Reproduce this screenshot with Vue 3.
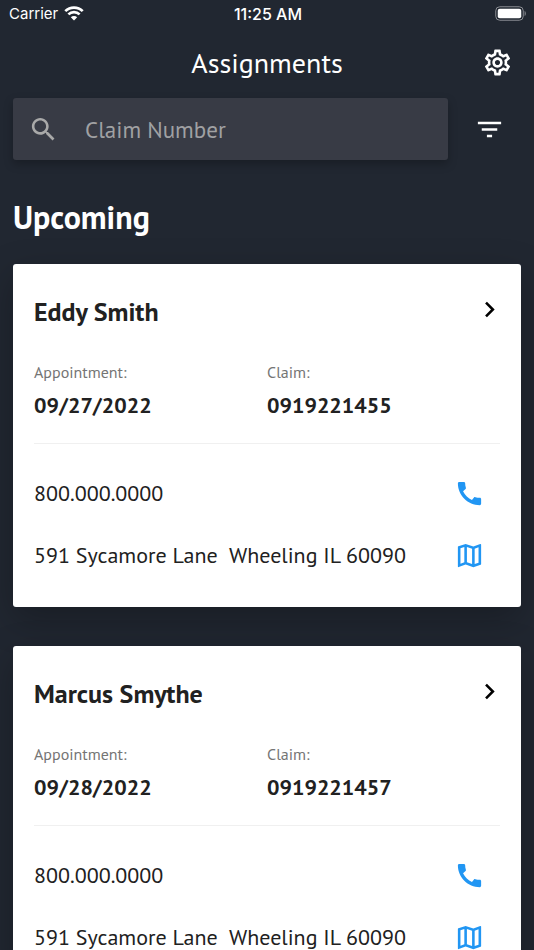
<template>
  <div class="app">
    <div class="status-bar">
      <div class="carrier">
        <span>Carrier</span>
        <svg class="wifi" viewBox="0 0 20 15" aria-hidden="true">
          <path d="M1.3 5.1a12.4 12.4 0 0 1 17.4 0" />
          <path d="M4.4 8.4a8 8 0 0 1 11.2 0" />
          <path class="dot" d="M10 14.5L6.8 11.3a4.6 4.6 0 0 1 6.4 0z" />
        </svg>
      </div>
      <span class="time">11:25 AM</span>
      <svg class="battery" viewBox="0 0 32 15" aria-hidden="true">
        <rect class="shell" x="0.75" y="0.75" width="27.5" height="13.5" rx="4" />
        <rect x="2.75" y="2.75" width="23.5" height="9.5" rx="2" />
        <path class="tip" d="M29.6 5c1.6.6 1.6 4.4 0 5z" />
      </svg>
    </div>

    <header class="header">
      <h1>Assignments</h1>
      <button class="icon-button settings" type="button" aria-label="Settings">
        <svg class="icon" viewBox="0 0 24 24"><path :d="icons.settings" /></svg>
      </button>
    </header>

    <form class="search-row" @submit.prevent>
      <label class="search">
        <svg class="icon" viewBox="0 0 24 24"><path :d="icons.search" /></svg>
        <input v-model="query" type="text" placeholder="Claim Number" aria-label="Claim Number">
      </label>
      <button class="icon-button filter" type="button" aria-label="Filter">
        <svg class="icon" viewBox="0 0 24 24"><path :d="icons.filter" /></svg>
      </button>
    </form>

    <main class="content">
      <h2>Upcoming</h2>
      <article v-for="item in filteredAssignments" :key="item.claim" class="card">
        <div class="card-header">
          <h3>{{ item.name }}</h3>
          <button class="icon-button" type="button" :aria-label="'Open ' + item.name">
            <svg class="icon" viewBox="0 0 24 24"><path :d="icons.chevron" /></svg>
          </button>
        </div>
        <dl class="details">
          <div>
            <dt>Appointment:</dt>
            <dd>{{ item.date }}</dd>
          </div>
          <div>
            <dt>Claim:</dt>
            <dd>{{ item.claim }}</dd>
          </div>
        </dl>
        <div class="contact">
          <div class="contact-row">
            <span>{{ item.phone }}</span>
            <a :href="'tel:' + item.phone" aria-label="Call">
              <svg class="icon" viewBox="0 0 24 24"><path :d="icons.phone" /></svg>
            </a>
          </div>
          <div class="contact-row">
            <span>{{ item.street }}&nbsp; {{ item.city }}</span>
            <a href="#map" aria-label="Map">
              <svg class="icon" viewBox="0 0 24 24"><path :d="icons.map" /></svg>
            </a>
          </div>
        </div>
      </article>
    </main>
  </div>
</template>

<script setup>
import { computed, ref } from 'vue';

const query = ref('');

const assignments = ref([
  {
    name: 'Eddy Smith',
    date: '09/27/2022',
    claim: '0919221455',
    phone: '800.000.0000',
    street: '591 Sycamore Lane',
    city: 'Wheeling IL 60090'
  },
  {
    name: 'Marcus Smythe',
    date: '09/28/2022',
    claim: '0919221457',
    phone: '800.000.0000',
    street: '591 Sycamore Lane',
    city: 'Wheeling IL 60090'
  }
]);

const filteredAssignments = computed(() =>
  assignments.value.filter(item => item.claim.includes(query.value.trim()))
);

const icons = {
  search: 'M15.5 14h-.79l-.28-.27C15.41 12.59 16 11.11 16 9.5 16 5.91 13.09 3 9.5 3S3 5.91 3 9.5 5.91 16 9.5 16c1.61 0 3.09-.59 4.23-1.57l.27.28v.79l5 4.99L20.49 19l-4.99-5zm-6 0C7.01 14 5 11.99 5 9.5S7.01 5 9.5 5 14 7.01 14 9.5 11.99 14 9.5 14z',
  filter: 'M10 18h4v-2h-4v2zM3 6v2h18V6H3zm3 7h12v-2H6v2z',
  chevron: 'M10 6L8.59 7.41 13.17 12l-4.58 4.59L10 18l6-6z',
  phone: 'M20.01 15.38c-1.23 0-2.42-.2-3.53-.56-.35-.12-.74-.03-1.01.24l-1.57 1.97c-2.83-1.35-5.48-3.9-6.89-6.83l1.95-1.66c.27-.28.35-.67.24-1.02-.37-1.11-.56-2.3-.56-3.53 0-.54-.45-.99-.99-.99H4.19C3.65 3 3 3.24 3 3.99 3 13.28 10.73 21 20.01 21c.71 0 .99-.63.99-1.18v-3.45c0-.54-.45-.99-.99-.99z',
  map: 'M20.5 3l-.16.03L15 5.1 9 3 3.36 4.9c-.21.07-.36.25-.36.48V20.5c0 .28.22.5.5.5l.16-.03L9 18.9l6 2.1 5.64-1.9c.21-.07.36-.25.36-.48V3.5c0-.28-.22-.5-.5-.5zM10 5.47l4 1.4v11.66l-4-1.4V5.47zm-5 .99l3-1.01v11.7l-3 1.16V6.46zm14 11.08l-3 1.01V6.86l3-1.16v11.84z',
  settings: 'M19.43 12.98c.04-.32.07-.64.07-.98 0-.34-.03-.66-.07-.98l2.11-1.65c.19-.15.24-.42.12-.64l-2-3.46c-.09-.16-.26-.25-.44-.25-.06 0-.12.01-.17.03l-2.49 1c-.52-.4-1.08-.73-1.69-.98l-.38-2.65C14.46 2.18 14.25 2 14 2h-4c-.25 0-.46.18-.49.42l-.38 2.65c-.61.25-1.17.59-1.69.98l-2.49-1c-.06-.02-.12-.03-.18-.03-.17 0-.34.09-.43.25l-2 3.46c-.13.22-.07.49.12.64l2.11 1.65c-.04.32-.07.65-.07.98 0 .33.03.66.07.98l-2.11 1.65c-.19.15-.24.42-.12.64l2 3.46c.09.16.26.25.44.25.06 0 .12-.01.17-.03l2.49-1c.52.4 1.08.73 1.69.98l.38 2.65c.03.24.24.42.49.42h4c.25 0 .46-.18.49-.42l.38-2.65c.61-.25 1.17-.59 1.69-.98l2.49 1c.06.02.12.03.18.03.17 0 .34-.09.43-.25l2-3.46c.12-.22.07-.49-.12-.64l-2.11-1.65zm-1.98-1.71c.04.31.05.52.05.73 0 .21-.02.43-.05.73l-.14 1.13.89.7 1.08.84-.7 1.21-1.27-.51-1.04-.42-.9.68c-.43.32-.84.56-1.25.73l-1.06.43-.16 1.13-.2 1.35h-1.4l-.19-1.35-.16-1.13-1.06-.43c-.43-.18-.83-.41-1.23-.71l-.91-.7-1.06.43-1.27.51-.7-1.21 1.08-.84.89-.7-.14-1.13c-.03-.31-.05-.54-.05-.74s.02-.43.05-.73l.14-1.13-.89-.7-1.08-.84.7-1.21 1.27.51 1.04.42.9-.68c.43-.32.84-.56 1.25-.73l1.06-.43.16-1.13.2-1.35h1.39l.19 1.35.16 1.13 1.06.43c.43.18.83.41 1.23.71l.91.7 1.06-.43 1.27-.51.7 1.21-1.07.85-.89.7.14 1.13zM12 8c-2.21 0-4 1.79-4 4s1.79 4 4 4 4-1.79 4-4-1.79-4-4-4zm0 6c-1.1 0-2-.9-2-2s.9-2 2-2 2 .9 2 2-.9 2-2 2z'
};
</script>

<style>
html {
  background-color: #212731;
  scrollbar-width: none;
}

body {
  margin: 0;
}
</style>

<style scoped>
.app {
  background-color: #212731;
  color: #fff;
  font-family: "PT Sans", "Noto Sans", sans-serif;
}

.status-bar {
  display: grid;
  grid-template-columns: 1fr auto 1fr;
  align-items: center;
  height: 27px;
  padding: 0 7px 0 9px;
  font-family: Inter, sans-serif;
  font-size: 15px;
}

.carrier {
  display: flex;
  align-items: center;
  gap: 6px;
}

.wifi {
  width: 20px;
  height: 15px;
  fill: none;
  stroke: #fff;
  stroke-width: 2.7;
}

.wifi .dot {
  fill: #fff;
  stroke: none;
}

.time {
  font-size: 16px;
  font-weight: 500;
}

.battery {
  width: 32px;
  height: 15px;
  justify-self: end;
  fill: #fff;
}

.battery .shell {
  fill: none;
  stroke: #888b91;
}

.battery .tip {
  fill: #888b91;
}

.header {
  display: grid;
  grid-template-columns: 1fr auto 1fr;
  align-items: center;
  height: 70px;
  padding: 0 21px;
}

h1 {
  grid-column: 2;
  margin: 0;
  font-size: 28px;
  font-weight: 400;
}

.icon {
  display: block;
  flex: none;
  width: 31px;
  height: 31px;
  fill: currentColor;
}

.icon-button {
  padding: 0;
  border: none;
  background: none;
  color: inherit;
  cursor: pointer;
}

.settings {
  justify-self: end;
}

.search-row {
  display: flex;
  align-items: center;
  gap: 26px;
  padding: 1px 29px 0 13px;
}

.search {
  display: flex;
  flex: 1;
  align-items: center;
  gap: 26px;
  height: 62px;
  padding: 0 15px;
  border-radius: 3px;
  background-color: #383b45;
  color: #a9a9a9;
  box-shadow: 0 4px 10px rgba(0, 0, 0, 0.25);
}

.search input {
  flex: 1;
  min-width: 0;
  padding: 0;
  border: none;
  outline: none;
  background: none;
  color: #fff;
  font-family: inherit;
  font-size: 23px;
}

.search input::placeholder {
  color: #a0a1a3;
  opacity: 1;
}

.content {
  padding: 35px 13px;
}

h2 {
  margin: 0 0 25px;
  font-size: 32px;
  line-height: 44px;
}

.card {
  margin-bottom: 39px;
  padding: 30px 21px 21px;
  border-radius: 3px;
  background-color: #fff;
  color: #212121;
  box-shadow: 0 12px 36px rgba(0, 0, 0, 0.25);
}

.card-header {
  display: flex;
  align-items: flex-start;
  justify-content: space-between;
  margin-right: -5px;
  color: #000;
}

h3 {
  margin: 0;
  color: #212121;
  font-size: 26px;
  line-height: 36px;
}

.details {
  display: grid;
  grid-template-columns: 1fr 1fr;
  margin: 0;
  padding: 30px 0 23px;
  border-bottom: 1px solid #f0f0f0;
}

dt {
  color: #757575;
  font-size: 16px;
  line-height: 24px;
}

dd {
  margin: 6px 0 0;
  font-size: 22px;
  font-weight: 700;
  line-height: 30px;
}

.contact {
  padding: 18px 15px 0 0;
}

.contact-row {
  display: flex;
  align-items: center;
  justify-content: space-between;
  height: 62px;
  font-size: 22px;
}

.contact-row a {
  color: #2196f3;
}
</style>
